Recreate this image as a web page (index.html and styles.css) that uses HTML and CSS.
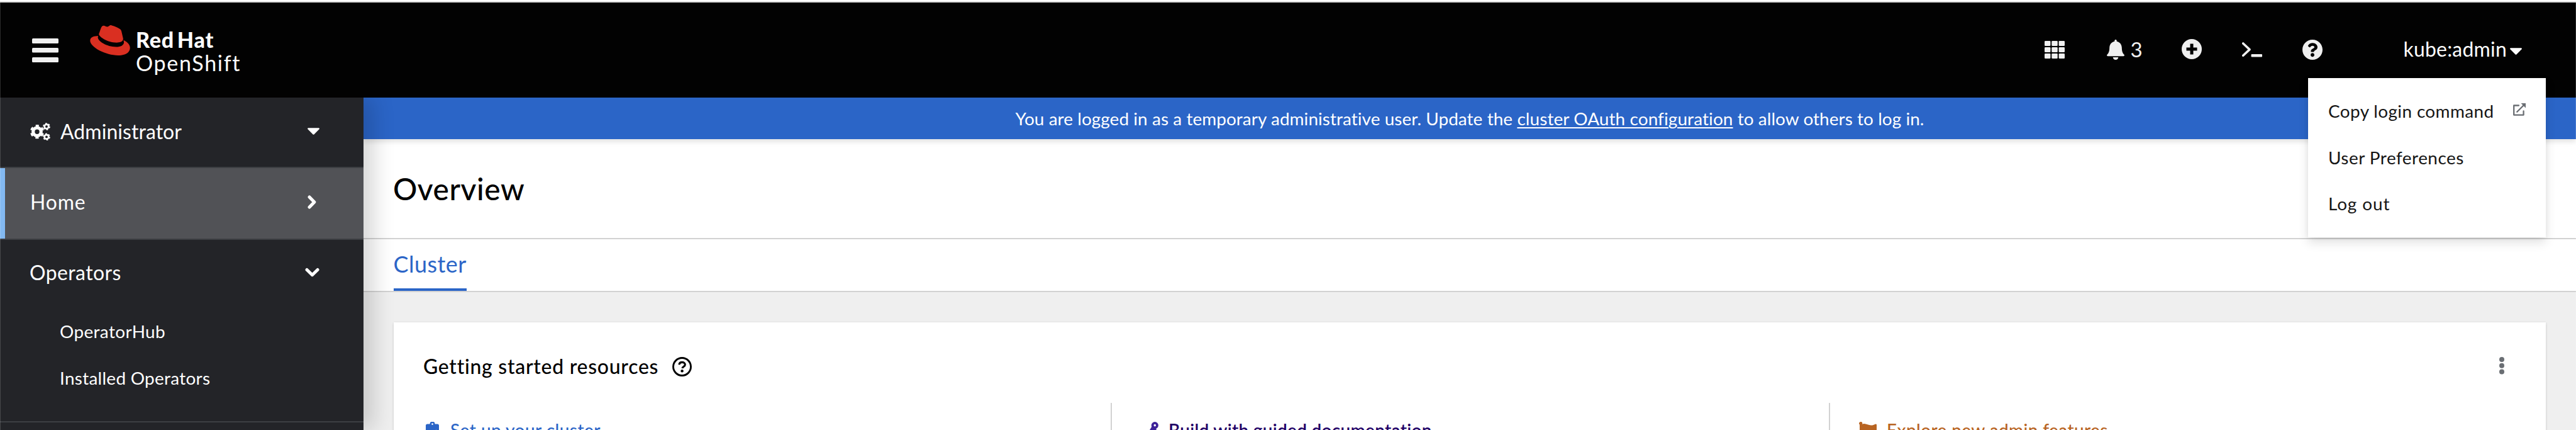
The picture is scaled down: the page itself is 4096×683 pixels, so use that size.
FILE: index.html
```html
<!DOCTYPE html>
<html lang="en">
<head>
<meta charset="utf-8">
<title>Overview · Red Hat OpenShift</title>
<link rel="stylesheet" href="styles.css">
</head>
<body>
<div class="page">
  <header class="masthead">
    <svg class="menu-toggle" viewBox="0 0 42 38"><rect width="42" height="8" rx="1.5"/><rect y="15" width="42" height="7.5" rx="1.5"/><rect y="30" width="42" height="8" rx="1.5"/></svg>
    <svg class="hat" viewBox="0 2.92 24 18.16"><path d="M16.009 13.386c1.577 0 3.86-.326 3.86-2.202a1.765 1.765 0 0 0-.04-.431l-.94-4.08c-.216-.898-.406-1.305-1.982-2.093-1.223-.625-3.888-1.658-4.676-1.658-.733 0-.947.946-1.822.946-.842 0-1.467-.706-2.255-.706-.757 0-1.25.515-1.63 1.576 0 0-1.06 2.99-1.197 3.424a.81.81 0 0 0-.028.245c0 1.162 4.577 4.974 10.71 4.974m4.101-1.435c.218 1.032.218 1.14.218 1.277 0 1.765-1.984 2.745-4.593 2.745-5.895.004-11.06-3.451-11.06-5.734a2.326 2.326 0 0 1 .19-.925C2.746 9.415 0 9.794 0 12.217c0 3.969 9.405 8.861 16.851 8.861 5.71 0 7.149-2.582 7.149-4.62 0-1.605-1.387-3.425-3.887-4.512"/></svg>
    <div class="brand"><span class="brand-top">Red Hat</span><span class="brand-bottom">OpenShift</span></div>
    <div class="tools">
      <svg class="apps" viewBox="0 0 32 28"><g><rect width="9.4" height="8" rx="1.3"/><rect x="11.3" width="9.4" height="8" rx="1.3"/><rect x="22.6" width="9.4" height="8" rx="1.3"/><rect y="10" width="9.4" height="8" rx="1.3"/><rect x="11.3" y="10" width="9.4" height="8" rx="1.3"/><rect x="22.6" y="10" width="9.4" height="8" rx="1.3"/><rect y="20" width="9.4" height="8" rx="1.3"/><rect x="11.3" y="20" width="9.4" height="8" rx="1.3"/><rect x="22.6" y="20" width="9.4" height="8" rx="1.3"/></g></svg>
      <svg class="bell" viewBox="0 0 28 32"><path d="M14 0c1 0 1.700.7 1.700 1.700v1.100C20.500 3.700 23.600 7.500 23.800 12.500c.2 6 1 8.500 3.700 11.200.9 1 .4 2.600-1.100 2.600H1.600c-1.500 0-2-1.600-1.100-2.600 2.700-2.700 3.500-5.200 3.700-11.200.2-5 3.300-8.800 8.100-9.700V1.700C12.300.7 13 0 14 0zM9.700 28h8.600c-.3 2.400-2 4-4.300 4s-4-1.600-4.300-4z"/></svg>
      <span class="count">3</span>
      <svg class="plus" viewBox="0 0 32 32"><path fill-rule="evenodd" d="M16 0a16 16 0 1 1 0 32a16 16 0 1 1 0-32zM13.500 7.500v6h-6v5h6v6h5v-6h6v-5h-6v-6z"/></svg>
      <svg class="terminal" viewBox="0 0 32 24"><path d="M1.700 2l10.300 9.600L1.700 21.200" fill="none" stroke="#f0f0f0" stroke-width="3.600" stroke-linecap="round" stroke-linejoin="round"/><rect x="14.500" y="19" width="17.500" height="4.500" rx="1"/></svg>
      <svg class="help" viewBox="8 8 496 496"><path d="M504 256c0 136.997-111.043 248-248 248S8 392.997 8 256C8 119.083 119.043 8 256 8s248 111.083 248 248zM262.655 90c-54.497 0-89.255 22.957-116.549 63.758-3.536 5.286-2.353 12.415 2.715 16.258l34.699 26.310c5.205 3.947 12.621 3.008 16.665-2.122 17.864-22.658 30.113-35.797 57.303-35.797 20.429 0 45.698 13.148 45.698 32.958 0 14.976-12.363 22.667-32.534 33.976C247.128 238.528 216 254.941 216 296v4c0 6.627 5.373 12 12 12h56c6.627 0 12-5.373 12-12v-1.333c0-28.462 83.186-29.647 83.186-106.667 0-58.002-60.165-102-116.531-102zM256 338c-25.365 0-46 20.635-46 46 0 25.364 20.635 46 46 46s46-20.636 46-46c0-25.365-20.635-46-46-46z"/></svg>
      <div class="user"><span class="user-name">kube:admin</span><svg class="caret" viewBox="10 192 300 169"><path d="M31.300 192h257.300c17.800 0 26.700 21.500 14.100 34.100L174.100 354.700c-7.800 7.800-20.500 7.800-28.300 0L17.200 226.100C4.600 213.500 13.500 192 31.300 192z"/></svg>
        <div class="menu">
          <div class="menu-item"><span class="m1">Copy login command</span><svg class="external" viewBox="0 0 20 20"><path d="M9 3.500H1.200V18.600H16.600V12.500M6.200 13.800L17.200 2.800" fill="none" stroke="#6a6e73" stroke-width="2.300" stroke-linejoin="round" stroke-linecap="round"/><path d="M12.500 0H20V7.500z" fill="#6a6e73"/></svg></div>
          <div class="menu-item"><span class="m2">User Preferences</span></div>
          <div class="menu-item"><span class="m3">Log out</span></div>
        </div>
      </div>
    </div>
  </header>
  <div class="body">
    <nav class="sidebar">
      <div class="perspective">
        <svg class="cogs" viewBox="0 0 32 28"><g fill="none" stroke="#fff"><circle cx="11" cy="14.200" r="6.300" stroke-width="5.200"/><circle cx="11" cy="14.200" r="9.400" stroke-width="3.400" stroke-dasharray="5 4.843" stroke-dashoffset="-2.400"/><circle cx="26" cy="6" r="3.300" stroke-width="2.700"/><circle cx="26" cy="6" r="4.900" stroke-width="1.900" stroke-dasharray="2.700 2.430"/><circle cx="26" cy="22.400" r="3.300" stroke-width="2.700"/><circle cx="26" cy="22.400" r="4.900" stroke-width="1.900" stroke-dasharray="2.700 2.430"/></g></svg>
        <span class="perspective-name">Administrator</span>
        <svg class="caret" viewBox="10 192 300 169"><path d="M31.300 192h257.300c17.800 0 26.700 21.500 14.100 34.100L174.100 354.700c-7.800 7.800-20.500 7.800-28.300 0L17.200 226.100C4.600 213.500 13.500 192 31.300 192z"/></svg>
      </div>
      <div class="nav-item current"><span class="home">Home</span><svg class="chevron-right" viewBox="0 0 15 22"><path d="M3 3l7.800 8L3 19" /></svg></div>
      <div class="nav-group">
        <div class="nav-head"><span class="operators">Operators</span><svg class="chevron-down" viewBox="0 0 23 15"><path d="M3 3.500l8.500 8.200L20 3.500"/></svg></div>
        <div class="nav-sub hub">OperatorHub</div>
        <div class="nav-sub installed">Installed Operators</div>
      </div>
    </nav>
    <main class="main">
      <div class="banner"><p>You are logged in as a temporary administrative user. Update the <a>cluster OAuth configuration</a> to allow others to log in.</p></div>
      <div class="title"><h1>Overview</h1></div>
      <div class="tabs"><div class="tab">Cluster</div></div>
      <div class="content">
        <section class="card">
          <div class="card-head"><h2>Getting started resources</h2>
            <svg class="help-outline" viewBox="0 0 31 31"><circle cx="15.500" cy="15.500" r="14" fill="none" stroke="#000" stroke-width="2.900"/><path d="M10.900 12.300c.3-2.500 2.200-3.900 4.700-3.900 2.600 0 4.700 1.500 4.700 3.900 0 3-3.900 2.900-4.400 5.700" fill="none" stroke="#000" stroke-width="3.100"/><circle cx="15.600" cy="22.300" r="2.200"/></svg>
            <svg class="kebab" viewBox="0 0 8 28"><circle cx="4" cy="4" r="4"/><circle cx="4" cy="13.700" r="4"/><circle cx="4" cy="23.400" r="4"/></svg>
          </div>
          <div class="resources">
            <div class="resource setup"><svg class="clip" viewBox="0 0 21 28"><path fill-rule="evenodd" d="M2.500 3.500H6.500a4 4 0 0 1 8 0H18.500A2.500 2.500 0 0 1 21 6V25.500A2.500 2.500 0 0 1 18.500 28H2.500A2.500 2.500 0 0 1 0 25.500V6A2.500 2.500 0 0 1 2.500 3.500zM10.500 2.200a1.400 1.400 0 1 0 0 2.800a1.400 1.400 0 1 0 0-2.800zM16.500 12.500L9.500 19.500 5.500 15.500 4 17l5.500 5.500 8.500-8.500z"/></svg><span>Set up your cluster</span></div>
            <div class="resource build"><svg class="route" viewBox="0 0 28 28"><circle cx="22.300" cy="5.600" r="3.700" fill="none" stroke="#3d2299" stroke-width="3.800"/><path d="M17.500 7.500L25 11.500L21 20L12.500 15.500z"/></svg><span>Build with guided documentation</span></div>
            <div class="resource explore"><svg class="flag" viewBox="0 0 28 28"><path d="M2.500 0A2.500 2.500 0 0 1 5 3.700C10 1.500 14 5.500 19 5.500C22 5.500 24 4.500 26 3.700C27 3.300 28 4 28 5V20C22 24 16 19 11 19C8 19 6 20 5 21V28H1V4.500A2.500 2.500 0 0 1 2.500 0z"/></svg><span>Explore new admin features</span></div>
          </div>
        </section>
      </div>
    </main>
  </div>
</div>
</body>
</html>
```
FILE: styles.css
```css
* { box-sizing: border-box; }
body { margin: 0; font-family: Lato, "Open Sans", sans-serif; background: #fff; }
svg { display: block; flex: none; }
h1, h2, p { margin: 0; font-weight: 500; }
.page { position: relative; width: 4096px; height: 683px; overflow: hidden; display: flex; flex-direction: column; padding-top: 2px; }
/* hairline window frame */
.page::after { content: ""; position: absolute; inset: 4px 0 0 0; border: solid rgba(255, 255, 255, .16); border-width: 0 1px; pointer-events: none; z-index: 9; }

.masthead { height: 153px; flex: none; background: #020202; border-top: 2px solid #ddd; display: flex; align-items: flex-start; padding-left: 51px; position: relative; z-index: 5; }
.masthead svg { fill: #f0f0f0; }
.menu-toggle { width: 42px; height: 38px; margin-top: 57px; }
.masthead .hat { width: 64px; height: 48px; margin: 36px 0 0 50px; fill: #da2f21; }
.brand { display: flex; flex-direction: column; margin: 41px 0 0 9px; color: #fff; line-height: 36.500px; white-space: nowrap; }
.brand-top { font-size: 34px; font-weight: 900; letter-spacing: .8px; word-spacing: -4px; }
.brand-bottom { font-size: 34px; letter-spacing: 1.700px; }
.tools { margin-left: auto; display: flex; align-items: flex-start; padding-right: 86px; }
.apps { width: 32px; height: 28px; margin: 61px 67px 0 0; }
.bell { width: 28px; height: 32px; margin: 59px 9px 0 0; }
.count { width: 20px; margin: 54px 62px 0 0; font-size: 33px; line-height: 40px; color: #f0f0f0; }
.plus { width: 32px; height: 32px; margin: 58px 64px 0 0; }
.terminal { width: 32px; height: 24px; margin: 63px 64px 0 0; }
.help { width: 32px; height: 32px; margin: 59px 128px 0 0; }
.user { display: flex; position: relative; color: #fff; }
.user-name { font-size: 31.900px; letter-spacing: .25px; line-height: 40px; margin: 54px 5px 0 0; white-space: nowrap; }
.masthead .caret, .perspective .caret { width: 19px; height: 11px; fill: #fff; }
.masthead .caret { margin-top: 72px; }
.menu { position: absolute; right: -38px; top: 120px; width: 378px; height: 253px; padding: 16px 32px 0 32px; background: #fff; box-shadow: 0 8px 16px rgba(3, 3, 3, .12), 0 0 8px rgba(3, 3, 3, .06); color: #151515; font-size: 27.900px; }
.menu-item { display: flex; justify-content: space-between; height: 73.500px; line-height: 72px; white-space: nowrap; }
.m1 { letter-spacing: .4px; }
.m2 { letter-spacing: .5px; }
.m3 { letter-spacing: .9px; }
.external { width: 20px; height: 20px; margin-top: 24px; }

.body { flex: 1; display: flex; min-height: 0; }
.sidebar { width: 578px; flex: none; background: #232428; color: #fff; position: relative; z-index: 3; box-shadow: 16px 0 32px rgba(3, 3, 3, .16); }
.perspective { height: 112px; display: flex; align-items: center; padding: 0 70px 2px 48px; border-bottom: 2px solid #3d3f43; }
.cogs { width: 32px; height: 28px; }
.perspective-name { margin-left: 16px; font-size: 31.900px; letter-spacing: .1px; flex: 1; }
.perspective .caret { margin-top: -1px; }
.nav-item { height: 114px; display: flex; align-items: center; justify-content: space-between; padding: 0 74px 4px 39px; border-bottom: 2px solid #3d3f43; font-size: 31.900px; }
.current { background: linear-gradient(#83b9f1, #83b9f1) 0 0 / 8px 100% no-repeat #515256; padding-left: 48px; }
.home { letter-spacing: .9px; }
.operators { letter-spacing: .45px; }
.sidebar path { fill: none; stroke: #fff; stroke-width: 5; stroke-linecap: round; stroke-linejoin: round; }
.sidebar .caret path { fill: #fff; stroke: none; }
.chevron-right { width: 15px; height: 22px; }
.chevron-down { width: 23px; height: 15px; margin-top: -2px; }
.nav-group { height: 290px; border-bottom: 2px solid #3d3f43; font-size: 27.900px; }
.nav-head { height: 108px; display: flex; align-items: center; justify-content: space-between; padding: 0 70px 4px 47px; font-size: 31.900px; }
.nav-sub { height: 73.500px; line-height: 74px; padding-left: 95px; }
.hub { letter-spacing: .38px; }
.installed { letter-spacing: .3px; }

.main { flex: 1; min-width: 0; display: flex; flex-direction: column; background: #efefef; }
.banner { height: 66px; flex: none; display: flex; justify-content: center; align-items: center; background: #2b65c7; color: #fff; font-size: 27.900px; letter-spacing: .075px; white-space: nowrap; box-shadow: 0 4px 8px rgba(3, 3, 3, .12); position: relative; z-index: 2; }
.banner p { font-weight: 400; }
.banner a { text-decoration: underline; text-decoration-thickness: 2px; text-underline-offset: 3px; letter-spacing: .12px; }
.title { height: 159px; flex: none; padding: 50px 0 0 47px; background: #fff; border-bottom: 2px solid #d2d2d2; }
h1 { font-size: 47.800px; line-height: 58px; letter-spacing: .6px; }
.tabs { height: 84px; flex: none; display: flex; background: #fff; border-bottom: 2px solid #d2d2d2; padding-left: 47.500px; }
.tab { height: 82px; border-bottom: 4px solid #2b65c7; color: #2b65c7; font-size: 35.900px; letter-spacing: .5px; line-height: 79px; width: 116px; }
.content { flex: 1; padding: 48px 48px 0 48px; min-height: 0; }
.card { height: 300px; background: #fff; box-shadow: 0 2px 4px rgba(3, 3, 3, .12), 0 0 4px rgba(3, 3, 3, .06); }
.card-head { height: 128px; display: flex; align-items: flex-start; padding: 0 66px 0 47px; }
h2 { font-size: 31.900px; letter-spacing: .76px; line-height: 40px; margin-top: 50px; }
.help-outline { width: 31px; height: 31px; margin: 55px 0 0 22px; }
.kebab { width: 8px; height: 28px; margin: 55px 0 0 auto; fill: #6a6e73; }
.resources { display: flex; font-size: 27.900px; font-weight: 500; line-height: 34px; white-space: nowrap; }
.resource { display: flex; height: 100px; padding-top: 30px; }
.resource span { margin-top: -4px; }
.setup { width: 1140px; padding-left: 51px; color: #2b65c7; fill: #2b65c7; letter-spacing: .5px; }
.build { width: 1142px; padding-left: 46px; border-left: 2px solid #d2d2d2; color: #1f0066; fill: #3d2299; font-weight: 600; letter-spacing: .33px; }
.explore { padding-left: 46px; border-left: 2px solid #d2d2d2; color: #b86422; fill: #b86422; letter-spacing: .42px; }
.clip { width: 21px; height: 28px; margin-right: 18px; }
.route, .flag { width: 28px; height: 28px; margin-right: 16px; }
```
